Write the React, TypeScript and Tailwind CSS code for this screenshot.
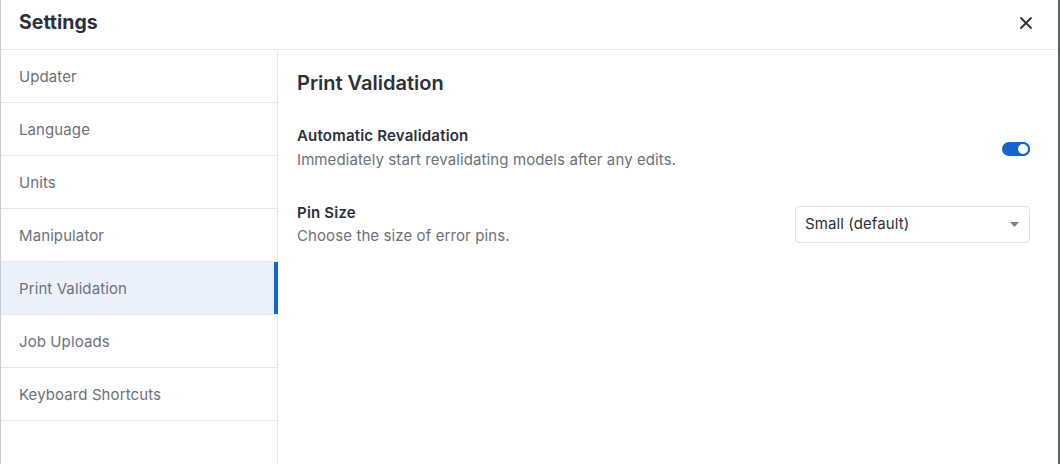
import React, { useState } from "react";
import { X } from "lucide-react";

const items = [
  "Updater",
  "Language",
  "Units",
  "Manipulator",
  "Print Validation",
  "Job Uploads",
  "Keyboard Shortcuts",
];

export default function App() {
  const [active, setActive] = useState("Print Validation");
  const [auto, setAuto] = useState(true);

  return (
    <div
      className="h-[464px] w-[1060px] bg-white flex flex-col border-l border-l-[#c9ccd2] border-r-2 border-r-[#5b5f66] text-[#2f3542] tracking-[0.1px]"
      style={{ fontFamily: '"Inter", "Noto Sans", sans-serif' }}
    >
      <div className="h-[50px] shrink-0 flex items-center justify-between pl-[18px] pr-[22px] pb-[4px] border-b border-[#e3e6ea]">
        <h1 className="text-[19.5px] font-bold text-[#2b313c] tracking-normal">Settings</h1>
        <X size={20} strokeWidth={2.2} className="text-[#2b313c] mt-[1px]" />
      </div>

      <div className="flex flex-1 min-h-0">
        <div className="w-[277px] shrink-0 border-r border-[#e3e6ea] flex flex-col">
          {items.map((item) => {
            const on = item === active;
            return (
              <button
                key={item}
                onClick={() => setActive(item)}
                className={`h-[53px] shrink-0 flex items-center pl-[18px] pt-[3px] text-left text-[15px] text-[#6b717c] border-b border-[#e3e6ea] relative ${on ? "bg-[#ebf1fb]" : "bg-white"}`}
              >
                {item}
                {on && (
                  <span className="absolute right-[-1px] top-0 bottom-0 w-[4px] bg-[#1565d0]" />
                )}
              </button>
            );
          })}
        </div>

        <div className="flex-1 pl-[19px] pr-[28px] pt-[20px]">
          <h2 className="text-[20px] font-semibold text-[#2b313c] leading-[26px] tracking-normal">
            Print Validation
          </h2>

          <div className="mt-[30px] flex items-center justify-between">
            <div>
              <div className="text-[15px] font-semibold text-[#2b313c] leading-[20px] tracking-[0.2px]">
                Automatic Revalidation
              </div>
              <div className="text-[15px] text-[#6b717c] leading-[27px]">
                Immediately start revalidating models after any edits.
              </div>
            </div>
            <button
              onClick={() => setAuto(!auto)}
              className={`w-[28px] h-[14px] -mt-[1px] rounded-full flex items-center ${auto ? "bg-[#1565d0] justify-end" : "bg-[#c9ccd2] justify-start"}`}
            >
              <span className="w-[14px] h-[14px] rounded-full bg-white border-2 border-[#1565d0]" />
            </button>
          </div>

          <div className="mt-[30px] flex items-center justify-between">
            <div>
              <div className="text-[15px] font-semibold text-[#2b313c] leading-[20px] tracking-[0.2px]">
                Pin Size
              </div>
              <div className="text-[15px] text-[#6b717c] leading-[26px]">
                Choose the size of error pins.
              </div>
            </div>
            <div className="w-[235px] h-[37px] -mt-[4px] border border-[#dfe2e6] rounded-[4px] flex items-center justify-between pl-[9px] pr-[10px] text-[15px] text-[#2b313c]">
              <span>Small (default)</span>
              <svg width="9" height="5" viewBox="0 0 9 5">
                <path d="M0 0h9L4.5 5z" fill="#7a7f88" />
              </svg>
            </div>
          </div>
        </div>
      </div>
    </div>
  );
}
